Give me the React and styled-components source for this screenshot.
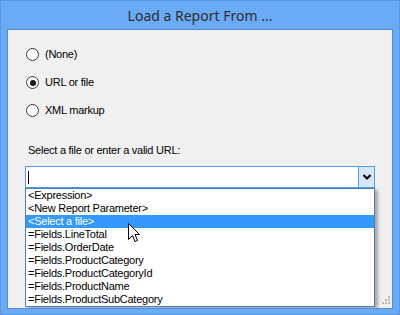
import React from 'react';
import styled, { createGlobalStyle } from 'styled-components';

const Global = createGlobalStyle`
  html, body { margin: 0; padding: 0; background: #ffffff; }
  body { width: 400px; height: 315px; overflow: hidden; }
`;

const Window = styled.div`
  width: 400px;
  height: 315px;
  box-sizing: border-box;
  background: #69abf4;
  border: 1px solid #5799e4;
  display: flex;
  flex-direction: column;
`;

const TitleBar = styled.div`
  height: 28px;
  display: flex;
  align-items: center;
  justify-content: center;
  font-family: "Noto Sans", "Open Sans", sans-serif;
  font-size: 14px;
  color: #2e2e2e;
`;

const Body = styled.div`
  flex: 1;
  display: flex;
  padding: 0 6px 5px 6px;
`;

const Panel = styled.div`
  flex: 1;
  position: relative;
  overflow: hidden;
  background: #f0f0f0;
  border: 1px solid #4e8cd6;
  padding: 18px 0 0 17px;
  display: flex;
  flex-direction: column;
  font-family: "Liberation Sans", Arial, sans-serif;
  font-size: 11px;
  letter-spacing: -0.25px;
  color: #000;
`;

const RadioGroup = styled.div`
  display: flex;
  flex-direction: column;
  gap: 15px;
  padding-left: 1px;
`;

const RadioRow = styled.label`
  display: flex;
  align-items: center;
  gap: 6px;
  height: 13px;
  line-height: 13px;
`;

const RadioCircle = styled.span`
  width: 13px;
  height: 13px;
  box-sizing: border-box;
  border-radius: 50%;
  border: 1px solid #3c3c3c;
  background: #ffffff;
  display: flex;
  align-items: center;
  justify-content: center;
  &::after {
    content: "";
    width: 6px;
    height: 6px;
    border-radius: 50%;
    background: #1a1a1a;
    display: ${p => (p.$checked ? 'block' : 'none')};
  }
`;

const FieldLabel = styled.div`
  margin-top: 27px;
  padding-left: 3px;
  height: 13px;
  line-height: 13px;
`;

const Combo = styled.div`
  margin-top: 9px;
  width: 350px;
  height: 22px;
  box-sizing: border-box;
  border: 1px solid #569de5;
  background: #ffffff;
  display: flex;
`;

const ComboInput = styled.div`
  flex: 1;
  display: flex;
  align-items: center;
  padding-left: 2px;
`;

const Caret = styled.span`
  width: 1px;
  height: 13px;
  background: #000;
`;

const ArrowButton = styled.div`
  width: 15px;
  border-left: 1px solid #569de5;
  background: #d4e8fa;
  display: flex;
  align-items: center;
  justify-content: center;
`;

const List = styled.div`
  width: 350px;
  box-sizing: border-box;
  border: 1px solid #4a7fb8;
  background: #ffffff;
  box-shadow: 3px 2px 3px rgba(0, 0, 0, 0.3);
`;

const ListItem = styled.div`
  height: 13px;
  line-height: 13px;
  padding-left: 2px;
  white-space: nowrap;
  background: ${p => (p.$selected ? '#3399ff' : 'transparent')};
  color: ${p => (p.$selected ? '#ffffff' : '#000000')};
`;

const Pointer = styled.svg`
  position: absolute;
  left: 120px;
  top: 193px;
`;

const Grip = styled.svg`
  position: absolute;
  right: 1px;
  bottom: 2px;
`;

const items = [
  '<Expression>',
  '<New Report Parameter>',
  '<Select a file>',
  '=Fields.LineTotal',
  '=Fields.OrderDate',
  '=Fields.ProductCategory',
  '=Fields.ProductCategoryId',
  '=Fields.ProductName',
  '=Fields.ProductSubCategory',
];

export default function App() {
  return (
    <>
      <Global />
      <Window>
        <TitleBar>Load a Report From ...</TitleBar>
        <Body>
          <Panel>
            <RadioGroup>
              <RadioRow><RadioCircle />(None)</RadioRow>
              <RadioRow><RadioCircle $checked />URL or file</RadioRow>
              <RadioRow><RadioCircle />XML markup</RadioRow>
            </RadioGroup>
            <FieldLabel>Select a file or enter a valid URL:</FieldLabel>
            <Combo>
              <ComboInput><Caret /></ComboInput>
              <ArrowButton>
                <svg width="8" height="6" viewBox="0 0 8 6">
                  <path d="M0.5 1 L4 4.5 L7.5 1" fill="none" stroke="#000" strokeWidth="2" />
                </svg>
              </ArrowButton>
            </Combo>
            <List>
              {items.map((t, i) => (
                <ListItem key={t} $selected={i === 2}>{t}</ListItem>
              ))}
            </List>
            <Pointer width="13" height="21" viewBox="0 0 13 21">
              <path d="M0.5 0.5 L0.5 16.5 L4.5 12.5 L7 18.5 L9.5 17.5 L7 11.5 L11.5 11.5 Z"
                fill="#ffffff" stroke="#000" strokeWidth="1" strokeLinejoin="miter" />
            </Pointer>
            <Grip width="10" height="10" viewBox="0 0 10 10">
              <g fill="#b9b9b9">
                <rect x="7" y="0" width="2" height="2" />
                <rect x="4" y="3" width="2" height="2" />
                <rect x="7" y="3" width="2" height="2" />
                <rect x="1" y="6" width="2" height="2" />
                <rect x="4" y="6" width="2" height="2" />
                <rect x="7" y="6" width="2" height="2" />
              </g>
            </Grip>
          </Panel>
        </Body>
      </Window>
    </>
  );
}
